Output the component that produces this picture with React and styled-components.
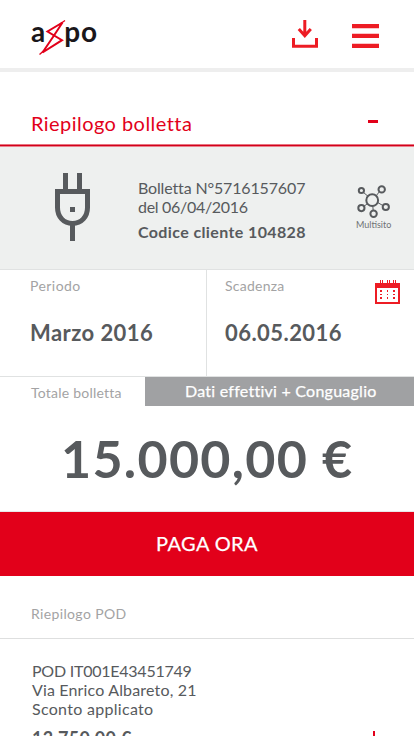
import React from 'react';
import styled, { createGlobalStyle } from 'styled-components';

const GlobalStyle = createGlobalStyle`
  *, *::before, *::after { box-sizing: border-box; }
  body {
    margin: 0;
    background: #fff;
    color: #575a5d;
    font-family: Lato, "Open Sans", sans-serif;
  }
`;

const Screen = styled.main`
  height: 736px;
  overflow: hidden;
  background: #fff;
`;

const Header = styled.header`
  display: flex;
  align-items: flex-start;
  height: 72px;
  padding-left: 31px;
  border-bottom: 4px solid #eee;
`;

const Logo = styled.div`
  display: flex;
  width: 261px;
  color: #1a171b;
  font-size: 28px;
  font-weight: 700;
  line-height: 34px;
  padding-top: 14px;

  svg { flex: none; margin: 4px 0 0 -7px; }
`;

const LogoTail = styled.span`
  margin-left: -3px;
  letter-spacing: 1px;
`;

const IconButton = styled.button`
  display: block;
  padding: 0;
  margin: 20px ${p => p.$gap || 0}px 0 0;
  border: 0;
  background: none;

  svg { display: block; }
`;

const SectionTitle = styled.h1`
  display: flex;
  justify-content: space-between;
  height: 72px;
  margin: 0;
  padding: 39px 36px 0 31px;
  color: #e2001a;
  font-size: 20px;
  font-weight: 400;
  line-height: 24px;
  letter-spacing: 0.45px;
`;

const Collapse = styled.span`
  width: 10px;
  height: 3px;
  margin-top: 9px;
  background: #e2001a;
`;

const TitleRule = styled.div`
  height: 3px;
  background: linear-gradient(#e9727f 1px, #d2001a 1px 2px, #e9828d 2px);
`;

const BillInfo = styled.section`
  display: flex;
  height: 123px;
  padding-left: 54px;
  background: #eef0ef;
  border-bottom: 1px solid #e0e2e2;

  > svg { flex: none; margin-top: 26px; }
`;

const BillText = styled.div`
  width: 265px;
  padding: 31px 0 0 47px;
  font-size: 16px;
  line-height: 19px;
  white-space: nowrap;
`;

const Line = styled.div`
  letter-spacing: ${p => p.$spacing || 0}px;
`;

const Customer = styled.div`
  margin-top: 6px;
  font-weight: 700;
  letter-spacing: 0.38px;
`;

const Multisite = styled.div`
  padding-top: 37px;
  color: #6f7275;
  font-size: 9px;
  line-height: 10px;
  letter-spacing: 0;

  svg { display: block; }
`;

const Details = styled.section`
  display: grid;
  grid-template-columns: 207px 1fr;
  height: 107px;
  border-bottom: 1px solid #e0e2e2;
`;

const Detail = styled.div`
  display: flex;
  justify-content: space-between;
  padding: 8px 14px 0 ${p => p.$indent}px;
  border-right: ${p => (p.$divided ? '1px solid #e0e2e2' : '0')};

  > svg { margin-top: 2px; }
`;

const Label = styled.div`
  color: #a3a3a4;
  font-size: 14px;
  line-height: 16px;
  letter-spacing: ${p => p.$spacing}px;
`;

const Value = styled.div`
  margin-top: 26px;
  font-size: 22px;
  font-weight: 700;
  line-height: 26px;
  letter-spacing: 0.44px;
`;

const TotalHeader = styled.div`
  display: grid;
  grid-template-columns: 145px 1fr;
  grid-template-rows: 29px;
  height: 29px;

  ${Label} { padding-left: 31px; line-height: 32px; }
`;

const Tag = styled.div`
  padding-left: 40px;
  background: #a0a1a3;
  color: #fff;
  font-size: 16px;
  line-height: 28px;
  letter-spacing: 0.25px;
  -webkit-text-stroke: 0.25px #fff;
`;

const Amount = styled.div`
  height: 106px;
  padding-left: 61px;
  border-bottom: 1px solid #e8e8e8;
  color: #575a5d;
  font-size: 52px;
  font-weight: 700;
  line-height: 105px;
  letter-spacing: 1.27px;
  white-space: nowrap;
`;

const PayButton = styled.button`
  display: block;
  width: 100%;
  height: 64px;
  padding: 0 0 2px;
  border: 0;
  background: #e2001a;
  color: #fff;
  font: 400 20px/62px Lato, sans-serif;
  letter-spacing: 0.4px;
  -webkit-text-stroke: 0.25px #fff;
`;

const PodHeader = styled.div`
  height: 63px;
  padding: 30px 0 0 31px;
  border-bottom: 1px solid #dedfdf;
`;

const Pod = styled.section`
  display: flex;
  justify-content: space-between;
  padding: 22px 34px 0 32px;
  font-size: 16px;
  line-height: 19px;

  > svg { flex: none; margin-top: 70px; }
`;

const PodTotal = styled.div`
  margin-top: 9px;
  font-size: 18px;
  font-weight: 700;
  line-height: 22px;
  letter-spacing: 0.3px;
`;

const Bolt = () => (
  <svg width="29" height="38" viewBox="38 18 29 38" fill="none" stroke="#e2001a" strokeWidth="2">
    <path d="M62.500 22.500 47.500 31.500 62 40.200 42.500 52.500 54 35.500Z" />
    <path d="m65 20.500-5 3.500M39.500 54.500l4-3.500" strokeWidth="1.4" />
  </svg>
);

const DownloadIcon = () => (
  <svg width="27" height="28" viewBox="0 0 27 28" fill="none" stroke="#ed1c24" strokeWidth="3">
    <path d="M12.8 0v16M6.8 9l6 6.8L18.8 9M1.5 18v8.2h23V18" />
  </svg>
);

const MenuIcon = () => (
  <svg width="27" height="28" viewBox="0 0 27 28" fill="#ed1c24">
    <path d="M0 4h27v4.3H0zM0 13.8h27V18H0zM0 23.7h27V28H0z" />
  </svg>
);

const PlugIcon = () => (
  <svg width="37" height="68" viewBox="0 0 37 68" fill="none" stroke="#575a5d" strokeWidth="5">
    <path d="M11.500 0v17M25.500 0v17M3.500 18.500h30v16c0 9-6 16-15 16s-15-7-15-16zM18.500 51v17" />
    <path d="M16 34h5v5h-5z" fill="#575a5d" stroke="none" />
  </svg>
);

const NetworkIcon = () => (
  <svg width="36" height="36" viewBox="356 184 36 36" fill="none" stroke="#575a5d" strokeWidth="2">
    <circle cx="372.2" cy="200.2" r="5.9" />
    <circle cx="361.4" cy="190.5" r="2.6" />
    <circle cx="381.7" cy="189.4" r="3.2" />
    <circle cx="361.4" cy="208.1" r="3.1" />
    <circle cx="385.8" cy="207" r="3.1" />
    <circle cx="373.6" cy="213.8" r="3.2" />
    <path d="m363.2 192.2 4.7 4M379.3 191.8l-3 3.8M364 206.3l3.5-2.7M378 202.7l4.8 2.8M372.8 206l.4 4.5" strokeWidth="1" />
  </svg>
);

const CalendarIcon = () => (
  <svg width="25" height="24" viewBox="0 0 25 24" fill="#ed1c24">
    <path d="M0 3h5V0h1v3h1V0h1v3h4V0h1v3h1V0h1v3h3V0h1v3h1V0h1v3h4v21H0zM2 8v14h21V8z" fillRule="evenodd" />
    <path d="M5 10h2v2H5zM5 14h2v1H5zM5 17h2v2H5zM12 10h1v2h-1zM12 14h1v1h-1zM12 17h1v2h-1zM18 10h2v2h-2zM18 14h2v1h-2zM18 17h2v2h-2z" />
  </svg>
);

const PlusIcon = () => (
  <svg width="12" height="12" viewBox="0 0 12 12" stroke="#e2001a" strokeWidth="2">
    <path d="M6 0v12M0 6h12" />
  </svg>
);

export default function App() {
  return (
    <Screen>
      <GlobalStyle />
      <Header>
        <Logo>
          <span>a</span>
          <Bolt />
          <LogoTail>po</LogoTail>
        </Logo>
        <IconButton $gap={33} aria-label="Scarica"><DownloadIcon /></IconButton>
        <IconButton aria-label="Menu"><MenuIcon /></IconButton>
      </Header>

      <SectionTitle>Riepilogo bolletta<Collapse /></SectionTitle>
      <TitleRule />

      <BillInfo>
        <PlugIcon />
        <BillText>
          <Line $spacing={-0.15}>Bolletta N°5716157607</Line>
          <Line $spacing={-0.3}>del 06/04/2016</Line>
          <Customer>Codice cliente 104828</Customer>
        </BillText>
        <Multisite><NetworkIcon />Multisito</Multisite>
      </BillInfo>

      <Details>
        <Detail $indent={30} $divided>
          <div>
            <Label $spacing={0.45}>Periodo</Label>
            <Value>Marzo 2016</Value>
          </div>
        </Detail>
        <Detail $indent={18}>
          <div>
            <Label $spacing={0.25}>Scadenza</Label>
            <Value>06.05.2016</Value>
          </div>
          <CalendarIcon />
        </Detail>
      </Details>

      <TotalHeader>
        <Label $spacing={0.22}>Totale bolletta</Label>
        <Tag>Dati effettivi + Conguaglio</Tag>
      </TotalHeader>
      <Amount>15.000,00 €</Amount>
      <PayButton>PAGA ORA</PayButton>

      <PodHeader><Label $spacing={0.36}>Riepilogo POD</Label></PodHeader>
      <Pod>
        <div>
          <Line $spacing={-0.24}>POD IT001E43451749</Line>
          <Line $spacing={0.16}>Via Enrico Albareto, 21</Line>
          <Line $spacing={0.3}>Sconto applicato</Line>
          <PodTotal>13.750,00 €</PodTotal>
        </div>
        <PlusIcon />
      </Pod>
    </Screen>
  );
}
